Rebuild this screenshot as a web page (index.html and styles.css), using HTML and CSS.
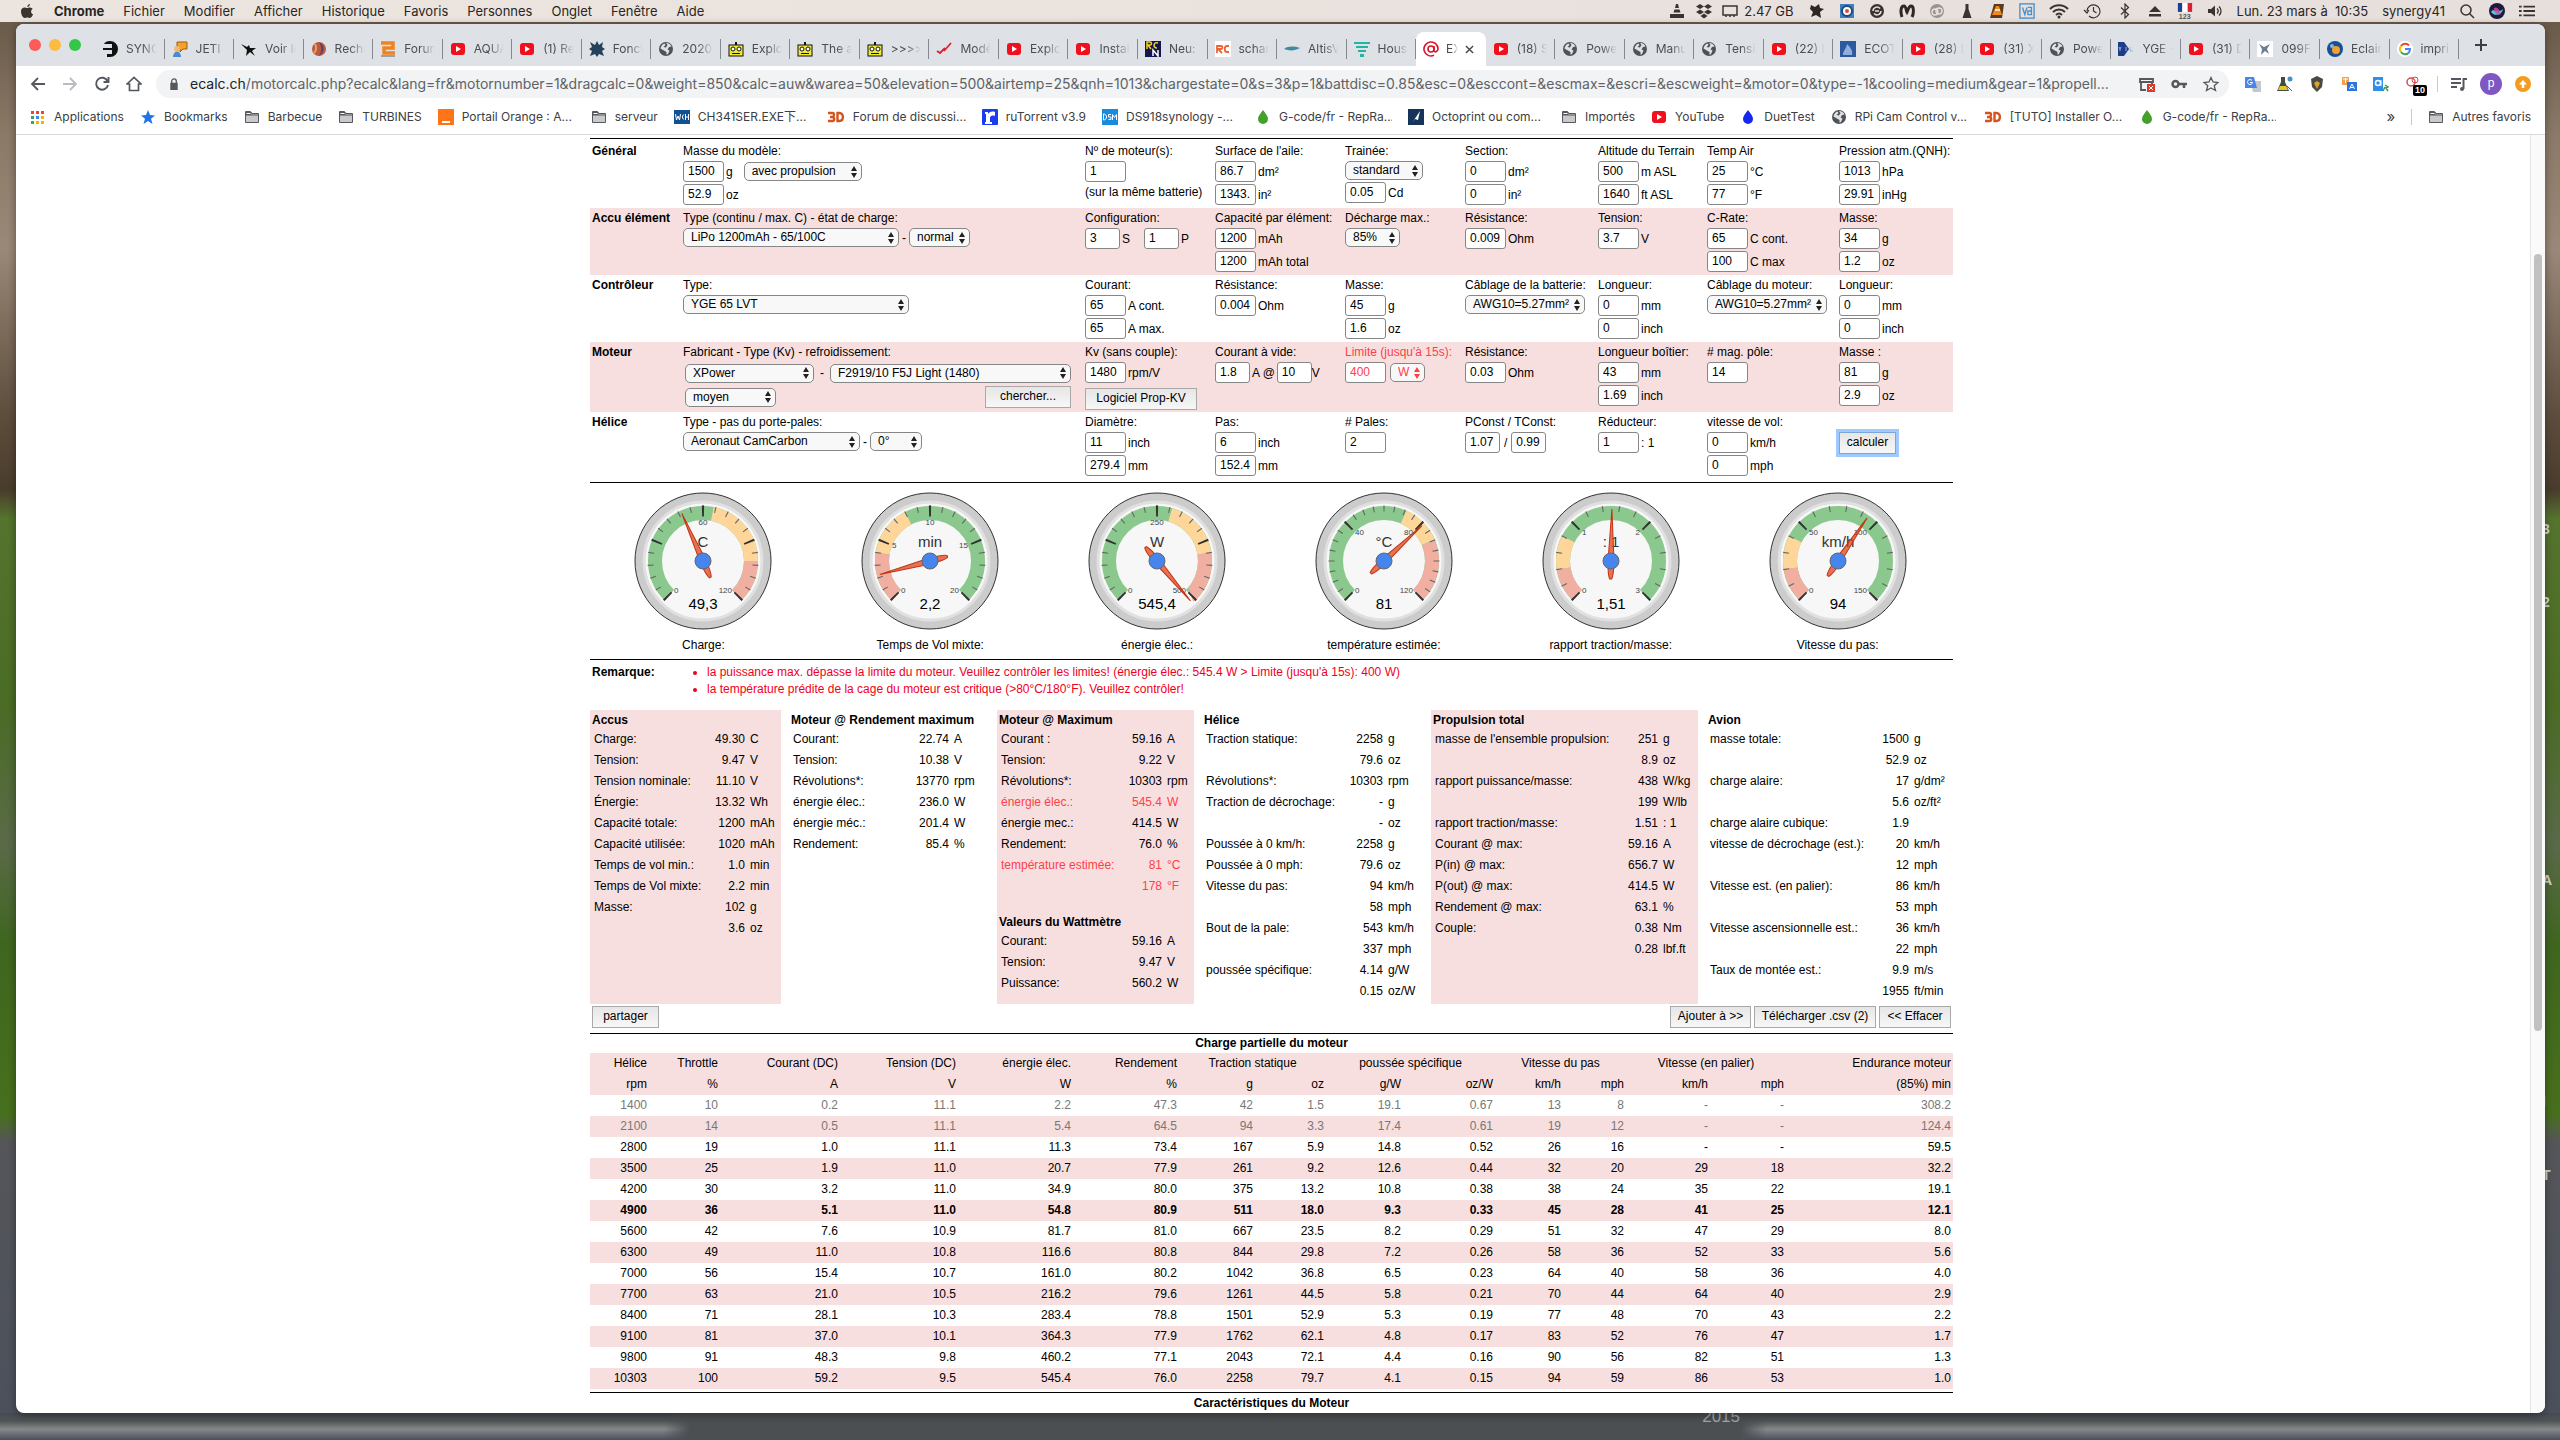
FILE: index.html
```html
<!DOCTYPE html>
<html lang="fr">
<head>
<meta charset="utf-8">
<title>eCalc - propCalc</title>
<link rel="stylesheet" href="styles.css">
</head>
<body>
<svg class="sprite" aria-hidden="true">
  <symbol id="yt" viewBox="0 0 16 16"><rect x="1" y="2" width="14" height="12" rx="3" fill="#f10f1e"/><path d="M6 5l5 3-5 3z" fill="#fff"/></symbol>
  <symbol id="globe" viewBox="0 0 16 16"><circle cx="8" cy="8" r="7" fill="#4f5358"/><path d="M8 2c3 0 4.500 1.500 5.500 3.500L11 6 9.500 8.500l2 1L10 13l-1.500.8V11L5 9 2.500 7.500C3 4.500 5 3 6.500 2.500L7.500 4l-2 2L8 6.500 9.500 4z" fill="#dfe1e5"/></symbol>
  <symbol id="robot" viewBox="0 0 16 16"><path d="M7 1h2v3H7z" fill="#111"/><rect x="1" y="4" width="14" height="11" fill="#ece93a" stroke="#111"/><circle cx="5" cy="8" r="2" fill="#fff" stroke="#111"/><circle cx="11" cy="8" r="2" fill="#fff" stroke="#111"/><path d="M4 12.500h8" stroke="#111"/></symbol>
  <symbol id="folder" viewBox="0 0 16 16"><path d="M1.500 13.500v-11h5l1.500 2h6.500v9z" fill="#c9c9c9" stroke="#55585c"/><path d="M2 3.500h5v2H2zM1.500 6h13" fill="#fff" stroke="#55585c"/></symbol>
  <symbol id="drop" viewBox="0 0 16 16"><path d="M8 1c3 4 5 6 5 9a5 5 0 0 1-10 0c0-3 2-5 5-9z"/></symbol>
  <symbol id="three" viewBox="0 0 18 16"><path d="M1 4h4.500c2 0 2 3.500 0 4H3m2.500 0c2.500.5 2 4 0 4H1M10.500 4v8h2c4.500 0 4.500-8 0-8z" fill="none" stroke="#d4541f" stroke-width="2.400"/></symbol>
  <symbol id="face" viewBox="-70 -70 140 140"><circle r="68" fill="#ccc" stroke="#333"/><circle r="59" fill="#f7f7f7" stroke="#e0e0e0" stroke-width="3"/></symbol>
  <symbol id="needle" viewBox="-70 -70 140 140" overflow="visible"><path d="M0-52L3 0Q3 14 1 18H-1Q-3 14-3 0Z" fill="#dc3912" fill-opacity=".7" stroke="#c63310"/></symbol>
  <path id="minor" d="M52.500 0A52.500 52.500 0 1 1 1.100-52.490" pathLength="271.2" transform="rotate(134.4)" fill="none" stroke="#666" stroke-width="6"/>
  <path id="major" d="M50 0A50 50 0 1 1 2.010-49.960" pathLength="272.3" transform="rotate(133.850)" fill="none" stroke="#333" stroke-width="11"/>
  <circle id="band" r="48" pathLength="360" transform="rotate(135)" fill="none" stroke-width="14"/>
</svg>

<header class="menubar">
  <svg class="ic" viewBox="0 0 16 16"><path d="M11 1c0 1.500-1.200 3-2.700 3C8.200 2.500 9.500 1.200 11 1zM5.500 4.500c1 0 1.700.6 2.500.6s1.800-.7 3-.6c1.200.1 2 .6 2.600 1.400-2.200 1.400-1.900 4.500.5 5.400-.6 1.600-1.900 3.700-3.300 3.700-.9 0-1.300-.5-2.500-.5s-1.600.5-2.500.5C4 15 2 11.500 2 8.500s1.800-4 3.500-4z" fill="#3a3330"/></svg>
  <strong>Chrome</strong><span>Fichier</span><span>Modifier</span><span>Afficher</span><span>Historique</span><span>Favoris</span><span>Personnes</span><span>Onglet</span><span>Fenêtre</span><span>Aide</span>
  <div class="status">
    <svg class="ic" viewBox="0 0 16 16"><path d="M7 1h2l1 4H6zM5.500 6.500h5l1 3h-7zM1 11h14v4H1z" fill="#3a3330"/></svg>
    <svg class="ic dropbox" viewBox="0 0 18 16"><path d="M5 1l4 2.500L5 6 1 3.500zM13 1l4 2.500L13 6 9 3.500zM5 6.500L9 9l-4 2.500L1 9zM13 6.500L17 9l-4 2.500L9 9zM9 10.500l3.500 2.500L9 15.500 5.500 13z" fill="#3a3330"/></svg>
    <svg class="ic mem" viewBox="0 0 16 16"><path d="M1 3h14v9H1zM4 12v2M8 12v2M12 12v2" fill="none" stroke="#3a3330" stroke-width="1.500"/></svg>
    <span class="gb">2.47 GB</span>
    <svg class="ic" viewBox="0 0 16 16"><path d="M2 2l4 2 4-3 1 4 4 1-4 3 1 6-5-3-5 2 2-5-3-3z" fill="#2d2826"/></svg>
    <svg class="ic" viewBox="0 0 16 16"><rect x="1" y="1" width="14" height="14" fill="#3f7fc0"/><circle cx="8" cy="8" r="5" fill="#fff" stroke="#1c4a80" stroke-width="2"/><circle cx="8" cy="8" r="2" fill="#e04a3a"/></svg>
    <svg class="ic" viewBox="0 0 16 16"><circle cx="8" cy="8" r="7" fill="#3a3330"/><path d="M4 8a4 4 0 0 1 7-2.500M12 8a4 4 0 0 1-7 2.500M6 8h4" fill="none" stroke="#e8e2de" stroke-width="1.500"/></svg>
    <svg class="ic" viewBox="0 0 16 16"><path d="M3 14C1 8 2 3 5 3c2 0 2 4 3 6 1-2 2-6 4-6 3 0 3 7 1 11" fill="none" stroke="#2d2826" stroke-width="3"/></svg>
    <svg class="ic" viewBox="0 0 16 16"><circle cx="8" cy="8" r="7" fill="#9a948f"/><circle cx="6" cy="9" r="3" fill="none" stroke="#e8e2de" stroke-width="1.400"/><circle cx="10" cy="8" r="3" fill="none" stroke="#e8e2de" stroke-width="1.400"/></svg>
    <svg class="ic" viewBox="0 0 16 16"><path d="M6.500 1h3v5l3 9h-9l3-9z" fill="#3a3330"/></svg>
    <svg class="ic" viewBox="0 0 16 16"><path d="M5 1h10l-2 14H1z" fill="#5a3a22"/><path d="M7 3h3l3 9H3z" fill="#f08a1c"/><path d="M6 7h5" stroke="#fff" stroke-width="1.500"/></svg>
    <svg class="ic" viewBox="0 0 18 18"><rect x="1" y="1" width="16" height="16" fill="none" stroke="#4b8fc9" stroke-width="1.500"/><path d="M4 5l2.500 8L9 5M10 5h4v4h-4v4h4V9" fill="none" stroke="#4b8fc9" stroke-width="1.500"/></svg>
    <svg class="ic wide" viewBox="0 0 20 16"><path d="M1 6c5-5 13-5 18 0M4 9c3.500-3.500 8.500-3.500 12 0M7 12c2-2 4-2 6 0" fill="none" stroke="#3a3330" stroke-width="2"/><circle cx="10" cy="14" r="1.500" fill="#3a3330"/></svg>
    <svg class="ic wide" viewBox="0 0 20 16"><path d="M4 8a6.500 6.500 0 1 1 2 5M1 7l3 3 2-3M10.500 4v4l3 2" fill="none" stroke="#3a3330" stroke-width="1.200"/></svg>
    <svg class="ic" viewBox="0 0 16 16"><path d="M4 4.500l7.500 7L8 15V1l3.500 3.500-7.500 7" fill="none" stroke="#3a3330" stroke-width="1.200"/></svg>
    <svg class="ic" viewBox="0 0 16 16"><path d="M8 3l6 6H2zM2 11h12v2.500H2z" fill="#3a3330"/></svg>
    <svg class="ic" viewBox="0 0 16 18"><path d="M0 0h5v10H0z" fill="#1c3f94"/><path d="M5 0h6v10H5z" fill="#fff"/><path d="M11 0h5v10h-5z" fill="#d8232e"/><text x="1" y="18" class="t123">123</text></svg>
    <svg class="ic" viewBox="0 0 16 16"><path d="M1 6h3l4-3.500v11L4 10H1z" fill="#3a3330"/><path d="M10 5.500c1.500 1.500 1.500 3.500 0 5M12 3.500c2.700 2.500 2.700 6.500 0 9" fill="none" stroke="#3a3330" stroke-width="1.300"/></svg>
    <span class="date">Lun. 23 mars à&nbsp; 10:35</span>
    <span class="user">synergy41</span>
    <svg class="ic" viewBox="0 0 16 16"><circle cx="7" cy="7" r="5" fill="none" stroke="#3a3330" stroke-width="1.500"/><path d="M10.500 10.500L15 15" stroke="#3a3330" stroke-width="1.500"/></svg>
    <svg class="ic" viewBox="0 0 16 16"><circle cx="8" cy="8" r="8" fill="#1d1a3c"/><path d="M2 9c3-5 5 3 12-3-1 6-8 8-12 3z" fill="#4fd0e0"/><path d="M5 5c3-2 6 2 7 6-4 2-8-2-7-6z" fill="#d94aa0" opacity=".8"/></svg>
    <svg class="ic" viewBox="0 0 18 16"><path d="M5 3h13M5 8h13M5 13h13M0 3h3M0 8h3M0 13h3" stroke="#3a3330" stroke-width="2"/></svg>
  </div>
</header>

<div class="desktop">
<span class="desk d1">3</span><span class="desk d2">2</span><span class="desk d3">A</span><span class="desk d4">I</span><span class="desk d5">T</span><span class="desk year">2015</span>
<div class="window">
  <div class="tabs">
    <i class="light red"></i><i class="light yellow"></i><i class="light green"></i>
    <div class="tablist">
      <div class="tab"><svg class="ic" viewBox="0 0 16 16"><path d="M8 0a8 8 0 0 1 0 16H5v-3h5V9H1V7h9V3H2C3 1 5 0 8 0z" fill="#111"/></svg><span>SYNC</span></div>
      <div class="tab"><svg class="ic" viewBox="0 0 16 16"><path d="M5 1h10v7h-4l-3 3V8H5z" fill="#f5a12a" stroke="#9c5c12"/><circle cx="5" cy="8" r="3" fill="#f0b87a"/><path d="M1 16c0-7 8-7 8 0z" fill="#4a8ad0"/></svg><span>JETI - </span></div>
      <div class="tab"><svg class="ic" viewBox="0 0 16 16"><path d="M0 3l6 3 2-2 1 3 6 0-4 3 3 5-5-4-4 4 1-6z" fill="#111"/></svg><span>Voir le</span></div>
      <div class="tab"><svg class="ic" viewBox="0 0 16 16"><circle cx="8" cy="8" r="7" fill="#b85a3c"/><path d="M8 1c6 3 6 10 0 14 3-5 3-9 0-14z" fill="#5a3c78"/><path d="M4 3c2 3 1 7-1 9" stroke="#e8a06a" fill="none" stroke-width="2"/></svg><span>Reche</span></div>
      <div class="tab"><svg class="ic" viewBox="0 0 16 16"><path d="M1 2h12v5H4v5h11" fill="none" stroke="#ee8420" stroke-width="3.500"/><path d="M1 15h14" stroke="#888" stroke-width="1.500"/></svg><span>Forum</span></div>
      <div class="tab"><svg class="ic"><use href="#yt"/></svg><span>AQUAS</span></div>
      <div class="tab"><svg class="ic"><use href="#yt"/></svg><span>(1) Re</span></div>
      <div class="tab"><svg class="ic" viewBox="0 0 16 16"><path d="M8 0l2 4 4-3-1 5 3 2-3 2 2 5-5-2-2 3-2-3-5 2 2-5-3-2 3-2-2-5 5 3z" fill="#24435a"/></svg><span>Foncti</span></div>
      <div class="tab"><svg class="ic"><use href="#globe"/></svg><span>2020 </span></div>
      <div class="tab"><svg class="ic"><use href="#robot"/></svg><span>Explor</span></div>
      <div class="tab"><svg class="ic"><use href="#robot"/></svg><span>The a</span></div>
      <div class="tab"><svg class="ic"><use href="#robot"/></svg><span>&gt;&gt;&gt;&gt;</span></div>
      <div class="tab"><svg class="ic" viewBox="0 0 16 16"><path d="M1 10l3 2 5-5M8 10l7-8" fill="none" stroke="#e01f2e" stroke-width="1.800"/></svg><span>Modèl</span></div>
      <div class="tab"><svg class="ic"><use href="#yt"/></svg><span>Explo</span></div>
      <div class="tab"><svg class="ic"><use href="#yt"/></svg><span>Instal</span></div>
      <div class="tab"><svg class="ic" viewBox="0 0 16 16"><path d="M0 0h16v16H0z" fill="#15154f"/><path d="M2 8V1h3c2 0 2 3 0 3H3l3 4M13 2c-4-2-6 5-1 5" fill="none" stroke="#f5d21c" stroke-width="1.500"/><path d="M8 15V9l5 6V9" fill="none" stroke="#fff" stroke-width="1.500"/></svg><span>Neu: </span></div>
      <div class="tab"><svg class="ic" viewBox="0 0 16 16"><path d="M0 0h16v16H0z" fill="#fff"/><path d="M2 12V5h4c2 0 2 3 0 3H3l4 4M14 5h-2c-3 0-3 6 0 6h2" fill="none" stroke="#e8663a" stroke-width="1.800"/></svg><span>schar</span></div>
      <div class="tab"><svg class="ic" viewBox="0 0 16 16"><path d="M0 8c4-3 10-3 16-1-5 3-11 3-16 1z" fill="#3a8ca0"/></svg><span>AltisV</span></div>
      <div class="tab"><svg class="ic" viewBox="0 0 16 16"><path d="M0 1h16v2H0zM2 5h12v2H2zM4 9h8v2H4zM6 13h4v3H6z" fill="#22b5a2"/></svg><span>House</span></div>
      <div class="tab active"><svg class="ic" viewBox="0 0 16 16"><circle cx="8" cy="8" r="3" fill="none" stroke="#d9142b" stroke-width="1.600"/><path d="M11 5v5c1 2 4 0 4-2a7 7 0 1 0-4 6.300" fill="none" stroke="#d9142b" stroke-width="1.600"/></svg><span>EX</span><svg class="close" viewBox="0 0 10 10"><path d="M1 1l8 8M9 1L1 9" stroke="#44484d" stroke-width="1.600"/></svg></div>
      <div class="tab"><svg class="ic"><use href="#yt"/></svg><span>(18) S</span></div>
      <div class="tab"><svg class="ic"><use href="#globe"/></svg><span>Power</span></div>
      <div class="tab"><svg class="ic"><use href="#globe"/></svg><span>Manu</span></div>
      <div class="tab"><svg class="ic"><use href="#globe"/></svg><span>Tensi</span></div>
      <div class="tab"><svg class="ic"><use href="#yt"/></svg><span>(22) I</span></div>
      <div class="tab"><svg class="ic" viewBox="0 0 16 16"><path d="M0 0h16v16H0z" fill="#2d5a9e"/><path d="M3 14c0-5 3-5 4-11 4 4 6 7 5 11z" fill="#8fb0dc"/></svg><span>ECOT</span></div>
      <div class="tab"><svg class="ic"><use href="#yt"/></svg><span>(28) I</span></div>
      <div class="tab"><svg class="ic"><use href="#yt"/></svg><span>(31) X</span></div>
      <div class="tab"><svg class="ic"><use href="#globe"/></svg><span>Power</span></div>
      <div class="tab"><svg class="ic" viewBox="0 0 16 16"><path d="M0 1h6l5 7-5 7H0z" fill="#1d3c8c"/><path d="M1 6l1 2 1-2M2 8v2M8 6v4M12 6v4h3" stroke="#9fb4e0" fill="none"/></svg><span>YGE - </span></div>
      <div class="tab"><svg class="ic"><use href="#yt"/></svg><span>(31) D</span></div>
      <div class="tab"><svg class="ic" viewBox="0 0 16 16"><path d="M0 0h16v16H0z" fill="#fff"/><path d="M2 3l5 3 6-3-3 5 2 5-4-3-4 4 1-6z" fill="#6a7f90"/></svg><span>099F</span></div>
      <div class="tab"><svg class="ic" viewBox="0 0 16 16"><circle cx="8" cy="8" r="8" fill="#1a4f94"/><circle cx="9" cy="9" r="4" fill="#f0a030"/><circle cx="5" cy="5" r="2" fill="#7ab8e8"/></svg><span>Eclair</span></div>
      <div class="tab"><svg class="ic" viewBox="0 0 16 16"><circle cx="8" cy="8" r="8" fill="#fff"/><path d="M12 4.500A5 5 0 0 0 4 5" stroke="#ea4335" stroke-width="2" fill="none"/><path d="M4 5a5 5 0 0 0 0 6" stroke="#fbbc05" stroke-width="2" fill="none"/><path d="M4 11a5 5 0 0 0 7.500 1" stroke="#34a853" stroke-width="2" fill="none"/><path d="M8 8h5c0 2-.5 3-1.500 4" stroke="#4285f4" stroke-width="2" fill="none"/></svg><span>impri</span></div>
    </div>
    <svg class="plus" viewBox="0 0 14 14"><path d="M7 1v12M1 7h12" stroke="#3c4043" stroke-width="2"/></svg>
  </div>

  <div class="toolbar">
    <svg class="ic" viewBox="0 0 16 16"><path d="M15 8H2M8 2L2 8l6 6" fill="none" stroke="#55595e" stroke-width="1.800"/></svg>
    <svg class="ic" viewBox="0 0 16 16"><path d="M1 8h13M8 2l6 6-6 6" fill="none" stroke="#b9bcc0" stroke-width="1.800"/></svg>
    <svg class="ic" viewBox="0 0 16 16"><path d="M13.500 5A6 6 0 1 0 14 9M14.500 1v5h-5" fill="none" stroke="#55595e" stroke-width="1.900"/></svg>
    <svg class="ic" viewBox="0 0 16 16"><path d="M1 8l7-6.500L15 8h-2.500v6.500h-9V8z" fill="none" stroke="#55595e" stroke-width="1.700"/></svg>
    <div class="omnibox">
      <svg class="lock" viewBox="0 0 10 14"><path d="M1 5h8v8H1z" fill="#55595e"/><path d="M2.500 6V3.500a2.500 2.500 0 0 1 5 0V6" fill="none" stroke="#55595e" stroke-width="1.400"/></svg>
      <div class="url"><b>ecalc.ch</b>/motorcalc.php?ecalc&amp;lang=fr&amp;motornumber=1&amp;dragcalc=0&amp;weight=850&amp;calc=auw&amp;warea=50&amp;elevation=500&amp;airtemp=25&amp;qnh=1013&amp;chargestate=0&amp;s=3&amp;p=1&amp;battdisc=0.85&amp;esc=0&amp;esccont=&amp;escmax=&amp;escri=&amp;escweight=&amp;motor=0&amp;type=-1&amp;cooling=medium&amp;gear=1&amp;propell...</div>
      <svg class="ic" viewBox="0 0 16 16"><path d="M1 3h13v3H1zM2 6v8h5M13 6v2" fill="none" stroke="#55595e" stroke-width="1.800"/><path d="M8 8h8v8H8z" fill="#d93a2f"/><path d="M10 10l4 4M14 10l-4 4" stroke="#fff"/></svg>
      <svg class="ic" viewBox="0 0 16 16"><circle cx="4.500" cy="8" r="3" fill="none" stroke="#55595e" stroke-width="2.500"/><path d="M8 8h8M13 8v4" stroke="#55595e" stroke-width="2.500"/></svg>
      <svg class="ic" viewBox="0 0 16 16"><path d="M8 1.500l2 4.500 5 .5-3.800 3.200L12.500 14.500 8 12l-4.500 2.500 1.300-4.800L1 6.500 6 6z" fill="none" stroke="#55595e" stroke-width="1.300"/></svg>
    </div>
    <svg class="ic" viewBox="0 0 16 16"><path d="M5 5h11v11H8z" fill="#c4c7cc"/><path d="M0 1h9l3 11H0z" fill="#4a86e8"/><path d="M7 4.500a2.500 2.500 0 1 0 .5 2H5" stroke="#fff" fill="none"/></svg>
    <svg class="ic" viewBox="0 0 16 16"><path d="M4 1h4v5l4 9H0l4-9z" fill="#3f4f3c"/><path d="M3 10h6l2 4H1z" fill="#e3c62c"/><circle cx="13" cy="3" r="2.500" fill="#4a90c8"/><path d="M10 10l5 5" stroke="#555"/></svg>
    <svg class="ic" viewBox="0 0 16 16"><path d="M8 0l6 3-1 8-5 5-5-5-1-8z" fill="#4b4a42"/><path d="M8 5l3 2-3 6-3-6z" fill="#d8a52c"/></svg>
    <svg class="ic" viewBox="0 0 16 16"><path d="M1 1h7v8H1z" fill="#f0a050"/><path d="M2 3h5M4.500 2v5" stroke="#fff"/><path d="M6 6h10v9H6z" fill="#2f74dc"/><path d="M8.500 13l2.500-5 2.500 5M9.500 11.500h3" stroke="#fff" fill="none"/></svg>
    <svg class="ic" viewBox="0 0 16 16"><rect width="10" height="14" y="1" fill="#2f8fe8"/><circle cx="5" cy="7" r="2.500" fill="none" stroke="#fff" stroke-width="1.500"/><path d="M8 4v6" stroke="#fff"/><path d="M12 9l3 2-2 1 2 3M12 11l-2 4" stroke="#3c9e48" stroke-width="1.500" fill="none"/></svg>
    <span class="ext"><svg class="ic" viewBox="0 0 16 16"><circle cx="6" cy="6" r="4" fill="none" stroke="#d94a50" stroke-width="1.500"/><circle cx="10" cy="4" r="3" fill="none" stroke="#d94a50"/><path d="M8 9l4 4" stroke="#d94a50" stroke-width="1.500"/></svg><em>10</em></span>
    <i class="vsep"></i>
    <svg class="ic" viewBox="0 0 16 16"><path d="M0 3h10M0 7h10M0 11h6M12.500 13V3H16" fill="none" stroke="#55595e" stroke-width="2"/><circle cx="11" cy="13" r="2" fill="#55595e"/></svg>
    <span class="avatar">p</span>
    <svg class="ic" viewBox="0 0 16 16"><circle cx="8" cy="8" r="8" fill="#f39c1f"/><path d="M8 4l4 4.500H9.300V12H6.700V8.500H4z" fill="#fff"/></svg>
  </div>

  <nav class="bookmarks">
    <a href="#"><svg class="ic" viewBox="0 0 16 16"><path d="M1 2h3v3H1z M6 2h3v3H6z M11 2h3v3h-3z" fill="#e8453c"/><path d="M1 7h3v3H1z" fill="#34a853"/><path d="M6 7h3v3H6z" fill="#4285f4"/><path d="M11 7h3v3h-3z" fill="#f5b400"/><path d="M1 12h3v3H1z" fill="#34a853"/><path d="M6 12h3v3H6zM11 12h3v3h-3z" fill="#f5b400"/></svg><span>Applications</span></a>
    <a href="#"><svg class="ic" viewBox="0 0 16 16"><path d="M8 1l2 5 5 .5-4 3.300L12.500 15 8 12l-4.500 3L5 9.800 1 6.500 6 6z" fill="#1f74e8"/></svg><span>Bookmarks</span></a>
    <a href="#"><svg class="ic"><use href="#folder"/></svg><span>Barbecue</span></a>
    <a href="#"><svg class="ic"><use href="#folder"/></svg><span>TURBINES</span></a>
    <a href="#"><svg class="ic" viewBox="0 0 16 16"><path d="M0 0h16v16H0z" fill="#ff7416"/><path d="M4 12h8v2H4z" fill="#fff"/></svg><span class="clip">Portail Orange : A...</span></a>
    <a href="#"><svg class="ic"><use href="#folder"/></svg><span>serveur</span></a>
    <a href="#"><svg class="ic" viewBox="0 0 16 16"><path d="M0 1h16v14H0z" fill="#134f93"/><path d="M1.500 5l1 6 1.500-4 1.500 4 1-6M10 6c-2-1-2 5 0 4M11.500 5v6M11.500 8h3M14.500 5v6" fill="none" stroke="#fff"/></svg><span class="clip">CH341SER.EXE下...</span></a>
    <a href="#"><svg class="ic w3d"><use href="#three"/></svg><span class="clip">Forum de discussi...</span></a>
    <a href="#"><svg class="ic" viewBox="0 0 16 16"><rect width="16" height="16" rx="1" fill="#1b3cf0"/><path d="M3 3h3v2c1-2 4-3 7-2v4c-3-1-5 0-5 2v4h2v2H3v-2h1V5H3z" fill="#fff"/></svg><span>ruTorrent v3.9</span></a>
    <a href="#"><svg class="ic" viewBox="0 0 16 16"><path d="M0 0h16v16H0z" fill="#168be0"/><path d="M1.500 5v6c4 0 4-6 0-6zM9 5.500H6.500v2.500H9v2.500H6.500M10.500 11V5.500l2 3 2-3V11" fill="none" stroke="#fff"/></svg><span class="clip">DS918synology -...</span></a>
    <a href="#"><svg class="ic leaf"><use href="#drop"/></svg><span class="clip">G-code/fr - RepRa...</span></a>
    <a href="#"><svg class="ic" viewBox="0 0 16 16"><path d="M0 0h16v16H0z" fill="#14345c"/><path d="M4 14L12 2l-2 9-3-1z" fill="#fff"/></svg><span class="clip">Octoprint ou com...</span></a>
    <a href="#"><svg class="ic"><use href="#folder"/></svg><span>Importés</span></a>
    <a href="#"><svg class="ic"><use href="#yt"/></svg><span>YouTube</span></a>
    <a href="#"><svg class="ic duet"><use href="#drop"/></svg><span>DuetTest</span></a>
    <a href="#"><svg class="ic"><use href="#globe"/></svg><span class="clip">RPi Cam Control v...</span></a>
    <a href="#"><svg class="ic w3d"><use href="#three"/></svg><span class="clip">[TUTO] Installer O...</span></a>
    <a href="#"><svg class="ic leaf"><use href="#drop"/></svg><span class="clip">G-code/fr - RepRa...</span></a>
    <span class="more">»</span><i class="vsep"></i>
    <a href="#"><svg class="ic"><use href="#folder"/></svg><span>Autres favoris</span></a>
  </nav>

  <div class="viewport">
  <main class="page">
  <div class="sheet">
    <form class="inputs">
      <section class="row first">
        <h2>Général</h2>
        <div class="cell"><span class="cap">Masse du modèle:</span>
          <div class="line"><label><input value="1500"> g</label><select class="w118 lead" aria-label="Masse"><option>avec propulsion</option></select></div>
          <div class="line"><label><input value="52.9"> oz</label></div></div>
        <div class="cell"><span class="cap">Nº de moteur(s):</span>
          <div class="line"><input value="1" aria-label="Nombre de moteurs"></div><span class="note">(sur la même batterie)</span></div>
        <div class="cell"><span class="cap">Surface de l'aile:</span>
          <div class="line"><label><input value="86.7"> dm²</label></div><div class="line"><label><input value="1343."> in²</label></div></div>
        <div class="cell"><span class="cap">Trainée:</span>
          <div class="line"><select class="w78" aria-label="Trainée"><option>standard</option></select></div><div class="line"><label><input value="0.05"> Cd</label></div></div>
        <div class="cell"><span class="cap">Section:</span>
          <div class="line"><label><input value="0"> dm²</label></div><div class="line"><label><input value="0"> in²</label></div></div>
        <div class="cell"><span class="cap">Altitude du Terrain</span>
          <div class="line"><label><input value="500"> m ASL</label></div><div class="line"><label><input value="1640"> ft ASL</label></div></div>
        <div class="cell"><span class="cap">Temp Air</span>
          <div class="line"><label><input value="25"> °C</label></div><div class="line"><label><input value="77"> °F</label></div></div>
        <div class="cell"><span class="cap">Pression atm.(QNH):</span>
          <div class="line"><label><input value="1013"> hPa</label></div><div class="line"><label><input value="29.91"> inHg</label></div></div>
      </section>
      <section class="row pink">
        <h2>Accu élément</h2>
        <div class="cell"><span class="cap">Type (continu / max. C) - état de charge:</span>
          <div class="line dash"><select class="w216" aria-label="Type d'accu"><option>LiPo 1200mAh - 65/100C</option></select>-<select class="w61" aria-label="État de charge"><option>normal</option></select></div></div>
        <div class="cell"><span class="cap">Configuration:</span>
          <div class="line"><label><input class="short" value="3"> S</label><label class="lead2"><input class="short" value="1"> P</label></div></div>
        <div class="cell"><span class="cap">Capacité par élément:</span>
          <div class="line"><label><input value="1200"> mAh</label></div><div class="line"><label><input value="1200"> mAh total</label></div></div>
        <div class="cell"><span class="cap">Décharge max.:</span>
          <div class="line"><select class="w55" aria-label="Décharge max."><option>85%</option></select></div></div>
        <div class="cell"><span class="cap">Résistance:</span>
          <div class="line"><label><input value="0.009"> Ohm</label></div></div>
        <div class="cell"><span class="cap">Tension:</span>
          <div class="line"><label><input value="3.7"> V</label></div></div>
        <div class="cell"><span class="cap">C-Rate:</span>
          <div class="line"><label><input value="65"> C cont.</label></div><div class="line"><label><input value="100"> C max</label></div></div>
        <div class="cell"><span class="cap">Masse:</span>
          <div class="line"><label><input value="34"> g</label></div><div class="line"><label><input value="1.2"> oz</label></div></div>
      </section>
      <section class="row">
        <h2>Contrôleur</h2>
        <div class="cell"><span class="cap">Type:</span>
          <div class="line"><select class="w226" aria-label="Type de contrôleur"><option>YGE 65 LVT</option></select></div></div>
        <div class="cell"><span class="cap">Courant:</span>
          <div class="line"><label><input value="65"> A cont.</label></div><div class="line"><label><input value="65"> A max.</label></div></div>
        <div class="cell"><span class="cap">Résistance:</span>
          <div class="line"><label><input value="0.004"> Ohm</label></div></div>
        <div class="cell"><span class="cap">Masse:</span>
          <div class="line"><label><input value="45"> g</label></div><div class="line"><label><input value="1.6"> oz</label></div></div>
        <div class="cell"><span class="cap">Câblage de la batterie:</span>
          <div class="line"><select class="w120" aria-label="Câblage de la batterie"><option>AWG10=5.27mm²</option></select></div></div>
        <div class="cell"><span class="cap">Longueur:</span>
          <div class="line"><label><input value="0"> mm</label></div><div class="line"><label><input value="0"> inch</label></div></div>
        <div class="cell"><span class="cap">Câblage du moteur:</span>
          <div class="line"><select class="w120" aria-label="Câblage du moteur"><option>AWG10=5.27mm²</option></select></div></div>
        <div class="cell"><span class="cap">Longueur:</span>
          <div class="line"><label><input value="0"> mm</label></div><div class="line"><label><input value="0"> inch</label></div></div>
      </section>
      <section class="row pink tall">
        <h2>Moteur</h2>
        <div class="cell motor"><span class="cap">Fabricant - Type (Kv) - refroidissement:</span>
          <div class="line"><select class="w129" aria-label="Fabricant"><option>XPower</option></select>-<select class="w241" aria-label="Type de moteur"><option>F2919/10 F5J Light (1480)</option></select></div>
          <div class="line"><select class="w91" aria-label="Refroidissement"><option>moyen</option></select><button type="button" class="w86">chercher...</button></div></div>
        <div class="cell"><span class="cap">Kv (sans couple):</span>
          <div class="line"><label><input value="1480"> rpm/V</label></div><div class="line below"><button type="button" class="w112">Logiciel Prop-KV</button></div></div>
        <div class="cell"><span class="cap">Courant à vide:</span>
          <div class="line"><label><input class="short" value="1.8"> A @</label><label class="lead1"><input class="short" value="10">V</label></div></div>
        <div class="cell warn"><span class="cap">Limite (jusqu'à 15s):</span>
          <div class="line"><input value="400" aria-label="Limite"><select class="w35" aria-label="Unité de la limite"><option>W</option></select></div></div>
        <div class="cell"><span class="cap">Résistance:</span>
          <div class="line"><label><input value="0.03"> Ohm</label></div></div>
        <div class="cell"><span class="cap">Longueur boîtier:</span>
          <div class="line"><label><input value="43"> mm</label></div><div class="line"><label><input value="1.69"> inch</label></div></div>
        <div class="cell"><span class="cap"># mag. pôle:</span>
          <div class="line"><input value="14" aria-label="Nombre de pôles"></div></div>
        <div class="cell"><span class="cap">Masse :</span>
          <div class="line"><label><input value="81"> g</label></div><div class="line"><label><input value="2.9"> oz</label></div></div>
      </section>
      <section class="row tall">
        <h2>Hélice</h2>
        <div class="cell"><span class="cap">Type - pas du porte-pales:</span>
          <div class="line dash"><select class="w177" aria-label="Type d'hélice"><option>Aeronaut CamCarbon</option></select>-<select class="w52" aria-label="Pas du porte-pales"><option>0°</option></select></div></div>
        <div class="cell"><span class="cap">Diamètre:</span>
          <div class="line"><label><input value="11"> inch</label></div><div class="line"><label><input value="279.4"> mm</label></div></div>
        <div class="cell"><span class="cap">Pas:</span>
          <div class="line"><label><input value="6"> inch</label></div><div class="line"><label><input value="152.4"> mm</label></div></div>
        <div class="cell"><span class="cap"># Pales:</span>
          <div class="line"><input value="2" aria-label="Nombre de pales"></div></div>
        <div class="cell"><span class="cap">PConst / TConst:</span>
          <div class="line"><input class="short" value="1.07" aria-label="PConst">/<input class="short" value="0.99" aria-label="TConst"></div></div>
        <div class="cell"><span class="cap">Réducteur:</span>
          <div class="line"><label><input value="1"> : 1</label></div></div>
        <div class="cell"><span class="cap">vitesse de vol:</span>
          <div class="line"><label><input value="0"> km/h</label></div><div class="line"><label><input value="0"> mph</label></div></div>
        <div class="cell"><span class="cap"></span>
          <div class="line"><button type="button" class="w57 focus">calculer</button></div></div>
      </section>
    </form>

    <section class="gauges">
      <figure><svg viewBox="-70 -70 140 140"><use href="#face" x="-70" y="-70" width="140" height="140"/><use href="#band" class="ok" stroke-dasharray="270 360"/><use href="#band" class="mid" stroke-dasharray="78.750 360" stroke-dashoffset="-146.250"/><use href="#band" class="bad" stroke-dasharray="45 360" stroke-dashoffset="-225"/><use href="#minor" stroke-dasharray="1.200 12.300"/><use href="#major" stroke-dasharray="2.300 65.200"/><text class="tick" x="-29" y="32">0</text><text class="tick mid-a" y="-36">60</text><text class="tick end" x="29" y="32">120</text><text class="unit" y="-14">C</text><text class="val" y="48">49,3</text><use href="#needle" x="-70" y="-70" width="140" height="140" transform="rotate(-24)"/><circle class="hub" r="8"/></svg><figcaption>Charge:</figcaption></figure>
      <figure><svg viewBox="-70 -70 140 140"><use href="#face" x="-70" y="-70" width="140" height="140"/><use href="#band" class="ok" stroke-dasharray="270 360"/><use href="#band" class="mid" stroke-dasharray="54 360" stroke-dashoffset="-54"/><use href="#band" class="bad" stroke-dasharray="54 360"/><use href="#minor" stroke-dasharray="1.200 12.300"/><use href="#major" stroke-dasharray="2.300 65.200"/><text class="tick" x="-29" y="32">0</text><text class="tick" x="-38" y="-13">5</text><text class="tick mid-a" y="-36">10</text><text class="tick end" x="38" y="-13">15</text><text class="tick end" x="29" y="32">20</text><text class="unit" y="-14">min</text><text class="val" y="48">2,2</text><use href="#needle" x="-70" y="-70" width="140" height="140" transform="rotate(-105)"/><circle class="hub" r="8"/></svg><figcaption>Temps de Vol mixte:</figcaption></figure>
      <figure><svg viewBox="-70 -70 140 140"><use href="#face" x="-70" y="-70" width="140" height="140"/><use href="#band" class="ok" stroke-dasharray="270 360"/><use href="#band" class="mid" stroke-dasharray="65 360" stroke-dashoffset="-151"/><use href="#band" class="bad" stroke-dasharray="54 360" stroke-dashoffset="-216"/><use href="#minor" stroke-dasharray="1.200 12.300"/><use href="#major" stroke-dasharray="2.300 65.200"/><text class="tick" x="-29" y="32">0</text><text class="tick mid-a" y="-36">250</text><text class="tick end" x="29" y="32">500</text><text class="unit" y="-14">W</text><text class="val" y="48">545,4</text><use href="#needle" x="-70" y="-70" width="140" height="140" transform="rotate(140)"/><circle class="hub" r="8"/></svg><figcaption>énergie élec.:</figcaption></figure>
      <figure><svg viewBox="-70 -70 140 140"><use href="#face" x="-70" y="-70" width="140" height="140"/><use href="#band" class="ok" stroke-dasharray="270 360"/><use href="#band" class="mid" stroke-dasharray="43 360" stroke-dashoffset="-159"/><use href="#band" class="bad" stroke-dasharray="67.500 360" stroke-dashoffset="-202.500"/><use href="#minor" stroke-dasharray="1.200 10.050"/><use href="#major" stroke-dasharray="2.300 87.700"/><text class="tick" x="-29" y="32">0</text><text class="tick" x="-29" y="-26">40</text><text class="tick end" x="29" y="-26">80</text><text class="tick end" x="29" y="32">120</text><text class="unit" y="-14">°C</text><text class="val" y="48">81</text><use href="#needle" x="-70" y="-70" width="140" height="140" transform="rotate(47)"/><circle class="hub" r="8"/></svg><figcaption>température estimée:</figcaption></figure>
      <figure><svg viewBox="-70 -70 140 140"><use href="#face" x="-70" y="-70" width="140" height="140"/><use href="#band" class="ok" stroke-dasharray="270 360"/><use href="#band" class="mid" stroke-dasharray="36 360" stroke-dashoffset="-36"/><use href="#band" class="bad" stroke-dasharray="36 360"/><use href="#minor" stroke-dasharray="1.200 16.800"/><use href="#major" stroke-dasharray="2.300 87.700"/><text class="tick" x="-29" y="32">0</text><text class="tick" x="-29" y="-26">1</text><text class="tick end" x="29" y="-26">2</text><text class="tick end" x="29" y="32">3</text><text class="unit" y="-14">: 1</text><text class="val" y="48">1,51</text><use href="#needle" x="-70" y="-70" width="140" height="140" transform="rotate(1)"/><circle class="hub" r="8"/></svg><figcaption>rapport traction/masse:</figcaption></figure>
      <figure><svg viewBox="-70 -70 140 140"><use href="#face" x="-70" y="-70" width="140" height="140"/><use href="#band" class="ok" stroke-dasharray="270 360"/><use href="#band" class="mid" stroke-dasharray="36 360" stroke-dashoffset="-36"/><use href="#band" class="bad" stroke-dasharray="36 360"/><use href="#minor" stroke-dasharray="1.200 16.800"/><use href="#major" stroke-dasharray="2.300 87.700"/><text class="tick" x="-29" y="32">0</text><text class="tick" x="-29" y="-26">50</text><text class="tick end" x="29" y="-26">100</text><text class="tick end" x="29" y="32">150</text><text class="unit" y="-14">km/h</text><text class="val" y="48">94</text><use href="#needle" x="-70" y="-70" width="140" height="140" transform="rotate(34)"/><circle class="hub" r="8"/></svg><figcaption>Vitesse du pas:</figcaption></figure>
    </section>

    <section class="remark">
      <h2>Remarque:</h2>
      <ul><li>la puissance max. dépasse la limite du moteur. Veuillez contrôler les limites! (énergie élec.: 545.4 W &gt; Limite (jusqu'à 15s): 400 W)</li><li>la température prédite de la cage du moteur est critique (&gt;80°C/180°F). Veuillez contrôler!</li></ul>
    </section>

    <section class="results">
      <div class="block pink"><h2>Accus</h2><table class="kv u36">
        <tr><th>Charge:</th><td>49.30</td><td>C</td></tr><tr><th>Tension:</th><td>9.47</td><td>V</td></tr><tr><th>Tension nominale:</th><td>11.10</td><td>V</td></tr><tr><th>Énergie:</th><td>13.32</td><td>Wh</td></tr><tr><th>Capacité totale:</th><td>1200</td><td>mAh</td></tr><tr><th>Capacité utilisée:</th><td>1020</td><td>mAh</td></tr><tr><th>Temps de vol min.:</th><td>1.0</td><td>min</td></tr><tr><th>Temps de Vol mixte:</th><td>2.2</td><td>min</td></tr><tr><th>Masse:</th><td>102</td><td>g</td></tr><tr><th></th><td>3.6</td><td>oz</td></tr></table></div>
      <div class="block"><h2>Moteur @ Rendement maximum</h2><table class="kv u48">
        <tr><th>Courant:</th><td>22.74</td><td>A</td></tr><tr><th>Tension:</th><td>10.38</td><td>V</td></tr><tr><th>Révolutions*:</th><td>13770</td><td>rpm</td></tr><tr><th>énergie élec.:</th><td>236.0</td><td>W</td></tr><tr><th>énergie méc.:</th><td>201.4</td><td>W</td></tr><tr><th>Rendement:</th><td>85.4</td><td>%</td></tr></table></div>
      <div class="block pink"><h2>Moteur @ Maximum</h2><table class="kv u32">
        <tr><th>Courant :</th><td>59.16</td><td>A</td></tr><tr><th>Tension:</th><td>9.22</td><td>V</td></tr><tr><th>Révolutions*:</th><td>10303</td><td>rpm</td></tr><tr class="warn"><th>énergie élec.:</th><td>545.4</td><td>W</td></tr><tr><th>énergie mec.:</th><td>414.5</td><td>W</td></tr><tr><th>Rendement:</th><td>76.0</td><td>%</td></tr><tr class="warn"><th>température estimée:</th><td>81</td><td>°C</td></tr><tr class="warn"><th></th><td>178</td><td>°F</td></tr></table>
        <h2 class="sub">Valeurs du Wattmètre</h2><table class="kv u32"><tr><th>Courant:</th><td>59.16</td><td>A</td></tr><tr><th>Tension:</th><td>9.47</td><td>V</td></tr><tr><th>Puissance:</th><td>560.2</td><td>W</td></tr></table></div>
      <div class="block"><h2>Hélice</h2><table class="kv u48">
        <tr><th>Traction statique:</th><td>2258</td><td>g</td></tr><tr><th></th><td>79.6</td><td>oz</td></tr><tr><th>Révolutions*:</th><td>10303</td><td>rpm</td></tr><tr><th>Traction de décrochage:</th><td>-</td><td>g</td></tr><tr><th></th><td>-</td><td>oz</td></tr><tr><th>Poussée à 0 km/h:</th><td>2258</td><td>g</td></tr><tr><th>Poussée à 0 mph:</th><td>79.6</td><td>oz</td></tr><tr><th>Vitesse du pas:</th><td>94</td><td>km/h</td></tr><tr><th></th><td>58</td><td>mph</td></tr><tr><th>Bout de la pale:</th><td>543</td><td>km/h</td></tr><tr><th></th><td>337</td><td>mph</td></tr><tr><th>poussée spécifique:</th><td>4.14</td><td>g/W</td></tr><tr><th></th><td>0.15</td><td>oz/W</td></tr></table></div>
      <div class="block pink"><h2>Propulsion total</h2><table class="kv u40">
        <tr><th>masse de l'ensemble propulsion:</th><td>251</td><td>g</td></tr><tr><th></th><td>8.9</td><td>oz</td></tr><tr><th>rapport puissance/masse:</th><td>438</td><td>W/kg</td></tr><tr><th></th><td>199</td><td>W/lb</td></tr><tr><th>rapport traction/masse:</th><td>1.51</td><td>: 1</td></tr><tr><th>Courant @ max:</th><td>59.16</td><td>A</td></tr><tr><th>P(in) @ max:</th><td>656.7</td><td>W</td></tr><tr><th>P(out) @ max:</th><td>414.5</td><td>W</td></tr><tr><th>Rendement @ max:</th><td>63.1</td><td>%</td></tr><tr><th>Couple:</th><td>0.38</td><td>Nm</td></tr><tr><th></th><td>0.28</td><td>lbf.ft</td></tr></table></div>
      <div class="block"><h2>Avion</h2><table class="kv u44">
        <tr><th>masse totale:</th><td>1500</td><td>g</td></tr><tr><th></th><td>52.9</td><td>oz</td></tr><tr><th>charge alaire:</th><td>17</td><td>g/dm²</td></tr><tr><th></th><td>5.6</td><td>oz/ft²</td></tr><tr><th>charge alaire cubique:</th><td>1.9</td><td></td></tr><tr><th>vitesse de décrochage (est.):</th><td>20</td><td>km/h</td></tr><tr><th></th><td>12</td><td>mph</td></tr><tr><th>Vitesse est. (en palier):</th><td>86</td><td>km/h</td></tr><tr><th></th><td>53</td><td>mph</td></tr><tr><th>Vitesse ascensionnelle est.:</th><td>36</td><td>km/h</td></tr><tr><th></th><td>22</td><td>mph</td></tr><tr><th>Taux de montée est.:</th><td>9.9</td><td>m/s</td></tr><tr><th></th><td>1955</td><td>ft/min</td></tr></table></div>
    </section>

    <div class="actions">
      <button type="button" class="w67 push">partager</button><button type="button" class="w81">Ajouter à &gt;&gt;</button><button type="button" class="w122">Télécharger .csv (2)</button><button type="button" class="w72">&lt;&lt; Effacer</button>
    </div>

    <table class="partial">
      <caption>Charge partielle du moteur</caption>
      <colgroup><col><col><col><col><col><col><col><col><col><col><col><col><col><col><col></colgroup>
      <thead>
        <tr><th>Hélice</th><th>Throttle</th><th>Courant (DC)</th><th>Tension (DC)</th><th>énergie élec.</th><th>Rendement</th><th colspan="2">Traction statique</th><th colspan="2">poussée spécifique</th><th colspan="2">Vitesse du pas</th><th colspan="2">Vitesse (en palier)</th><th>Endurance moteur</th></tr>
        <tr><th>rpm</th><th>%</th><th>A</th><th>V</th><th>W</th><th>%</th><th>g</th><th>oz</th><th>g/W</th><th>oz/W</th><th>km/h</th><th>mph</th><th>km/h</th><th>mph</th><th>(85%) min</th></tr>
      </thead>
      <tbody>
        <tr class="dim"><td>1400</td><td>10</td><td>0.2</td><td>11.1</td><td>2.2</td><td>47.3</td><td>42</td><td>1.5</td><td>19.1</td><td>0.67</td><td>13</td><td>8</td><td>-</td><td>-</td><td>308.2</td></tr>
        <tr class="dim"><td>2100</td><td>14</td><td>0.5</td><td>11.1</td><td>5.4</td><td>64.5</td><td>94</td><td>3.3</td><td>17.4</td><td>0.61</td><td>19</td><td>12</td><td>-</td><td>-</td><td>124.4</td></tr>
        <tr><td>2800</td><td>19</td><td>1.0</td><td>11.1</td><td>11.3</td><td>73.4</td><td>167</td><td>5.9</td><td>14.8</td><td>0.52</td><td>26</td><td>16</td><td>-</td><td>-</td><td>59.5</td></tr>
        <tr><td>3500</td><td>25</td><td>1.9</td><td>11.0</td><td>20.7</td><td>77.9</td><td>261</td><td>9.2</td><td>12.6</td><td>0.44</td><td>32</td><td>20</td><td>29</td><td>18</td><td>32.2</td></tr>
        <tr><td>4200</td><td>30</td><td>3.2</td><td>11.0</td><td>34.9</td><td>80.0</td><td>375</td><td>13.2</td><td>10.8</td><td>0.38</td><td>38</td><td>24</td><td>35</td><td>22</td><td>19.1</td></tr>
        <tr class="best"><td>4900</td><td>36</td><td>5.1</td><td>11.0</td><td>54.8</td><td>80.9</td><td>511</td><td>18.0</td><td>9.3</td><td>0.33</td><td>45</td><td>28</td><td>41</td><td>25</td><td>12.1</td></tr>
        <tr><td>5600</td><td>42</td><td>7.6</td><td>10.9</td><td>81.7</td><td>81.0</td><td>667</td><td>23.5</td><td>8.2</td><td>0.29</td><td>51</td><td>32</td><td>47</td><td>29</td><td>8.0</td></tr>
        <tr><td>6300</td><td>49</td><td>11.0</td><td>10.8</td><td>116.6</td><td>80.8</td><td>844</td><td>29.8</td><td>7.2</td><td>0.26</td><td>58</td><td>36</td><td>52</td><td>33</td><td>5.6</td></tr>
        <tr><td>7000</td><td>56</td><td>15.4</td><td>10.7</td><td>161.0</td><td>80.2</td><td>1042</td><td>36.8</td><td>6.5</td><td>0.23</td><td>64</td><td>40</td><td>58</td><td>36</td><td>4.0</td></tr>
        <tr><td>7700</td><td>63</td><td>21.0</td><td>10.5</td><td>216.2</td><td>79.6</td><td>1261</td><td>44.5</td><td>5.8</td><td>0.21</td><td>70</td><td>44</td><td>64</td><td>40</td><td>2.9</td></tr>
        <tr><td>8400</td><td>71</td><td>28.1</td><td>10.3</td><td>283.4</td><td>78.8</td><td>1501</td><td>52.9</td><td>5.3</td><td>0.19</td><td>77</td><td>48</td><td>70</td><td>43</td><td>2.2</td></tr>
        <tr><td>9100</td><td>81</td><td>37.0</td><td>10.1</td><td>364.3</td><td>77.9</td><td>1762</td><td>62.1</td><td>4.8</td><td>0.17</td><td>83</td><td>52</td><td>76</td><td>47</td><td>1.7</td></tr>
        <tr><td>9800</td><td>91</td><td>48.3</td><td>9.8</td><td>460.2</td><td>77.1</td><td>2043</td><td>72.1</td><td>4.4</td><td>0.16</td><td>90</td><td>56</td><td>82</td><td>51</td><td>1.3</td></tr>
        <tr><td>10303</td><td>100</td><td>59.2</td><td>9.5</td><td>545.4</td><td>76.0</td><td>2258</td><td>79.7</td><td>4.1</td><td>0.15</td><td>94</td><td>59</td><td>86</td><td>53</td><td>1.0</td></tr>
      </tbody>
    </table>
    <h2 class="next">Caractéristiques du Moteur</h2>
  </div>
  </main>
  <div class="scrollbar"><i></i></div>
  </div>
</div>
</div>
</body>
</html>
```
FILE: styles.css
```css
* { box-sizing: border-box; }
html, body { height: 100%; }
body {
  margin: 0;
  display: flex;
  flex-direction: column;
  overflow: hidden;
  font: 12px/16px "Liberation Sans", Arial, sans-serif;
  color: #000;
}
.sprite { display: none; }
h2 { margin: 0; font-size: 12px; line-height: 17px; font-weight: bold; }

/* system menu bar */
.menubar {
  display: flex;
  align-items: center;
  gap: 19px;
  height: 22px;
  padding: 0 25px 0 19px;
  background: linear-gradient(90deg, #ece5df, #e6dfdc);
  font: 13px/22px Inter, sans-serif;
  color: #2a2523;
  white-space: nowrap;
}
.ic { width: 16px; height: 16px; flex: none; }
.status { display: flex; align-items: center; gap: 14px; margin-left: auto; }
.status .dropbox { width: 18px; margin-left: -4px; }
.status .mem { margin-right: -8px; margin-left: -5px; }
.status .gb { margin-right: 1px; }
.status .wide { width: 20px; }
.t123 { font: bold 8px "Liberation Sans", sans-serif; fill: #555; }

/* desktop behind the window */
.desktop {
  position: relative;
  flex: 1;
  min-height: 0;
  padding: 2px 15px 27px 16px;
  background:
    linear-gradient(100deg, transparent 26%, #4b4f52 27%, #4b4f52 68%, transparent 69%) bottom / 100% 27px no-repeat,
    linear-gradient(#474b52, #4f5556 30%, #85898a 60%, #4c4d5c) bottom / 100% 27px no-repeat,
    linear-gradient(#6a5a4a, #8c7a68 8%, #9a8878 16%, #5c4c3c 28%, #4a3c2c 33%, #55742e 35%, #4a6c24 48%, #5a6a48 58%, #3f661f 65%, #47701c 77%, #55565a 79%, #4a505c 100%);
}
.desk { position: absolute; right: 1px; width: 17px; font: bold 14px/14px "Liberation Sans", sans-serif; color: #d5d8d2; }
.d1 { top: 500px; } .d2 { top: 573px; } .d3 { top: 851px; } .d4 { top: 1072px; } .d5 { top: 1146px; }
.year { right: 820px; bottom: 16px; width: auto; font-size: 17px; font-weight: normal; color: #a3a6a6; }
.window {
  position: relative;
  display: flex;
  flex-direction: column;
  height: 100%;
  background: #fff;
  border-radius: 8px;
  overflow: hidden;
  box-shadow: 0 2px 8px rgba(0, 0, 0, .4);
}

/* tab strip */
.tabs { display: flex; align-items: center; height: 42px; padding: 0 57px 0 13px; background: #dee1e6; flex: none; }
.light { width: 12px; height: 12px; border-radius: 50%; margin-right: 8px; flex: none; }
.red { background: #fc5b57; } .yellow { background: #fdbc40; } .green { background: #33c748; }
.tablist { display: flex; flex: 1; min-width: 0; align-self: flex-end; height: 34px; margin-left: 6px; }
.tab {
  display: flex;
  align-items: center;
  gap: 8px;
  flex: 1 1 0;
  min-width: 0;
  padding: 0 8px 0 7px;
  font: 12px/16px Inter, sans-serif;
  color: #4a4d52;
  background: linear-gradient(#85898f, #85898f) right center / 1px 20px no-repeat;
}
.tab span { flex: 1; min-width: 0; overflow: hidden; white-space: pre; -webkit-mask: linear-gradient(90deg, #000 50%, transparent); mask: linear-gradient(90deg, #000 50%, transparent); }
.tab.active { background: #fff; border-radius: 8px 8px 0 0; gap: 7px; }
.close { width: 9px; height: 9px; flex: none; margin-right: 4px; }
.plus { width: 14px; height: 14px; margin-left: 15px; flex: none; }

/* toolbar */
.toolbar { display: flex; align-items: center; gap: 16px; height: 36px; padding: 0 14px; flex: none; }
.toolbar .vsep ~ * { margin-left: -3px; }
.omnibox { display: flex; align-items: center; gap: 16px; flex: 1; min-width: 0; height: 28px; padding: 0 10px 0 13px; margin-left: -2px; border-radius: 14px; background: #f1f3f4; }
.lock { width: 10px; height: 13px; flex: none; margin-right: -5px; }
.url { flex: 1; min-width: 0; overflow: hidden; white-space: nowrap; font: 14px/20px Inter, sans-serif; color: #5f6368; }
.url b { font-weight: normal; color: #202124; }
.ext { position: relative; display: flex; }
.ext em { position: absolute; left: 8px; top: 9px; padding: 0 2px; border-radius: 2px; background: #000; color: #fff; font: bold 9px/11px "Liberation Sans", sans-serif; }
.vsep { width: 1px; height: 16px; background: #c8cacd; flex: none; }
.avatar { width: 22px; height: 22px; border-radius: 50%; background: #7e57c2; color: #fff; text-align: center; line-height: 20px; }

/* bookmarks */
.bookmarks { display: flex; align-items: center; gap: 16px; height: 33px; padding: 0 14px 2px; border-bottom: 1px solid #d9dadd; flex: none; font: 12px/16px Inter, "Noto Sans CJK SC", sans-serif; color: #3c4043; }
.bookmarks a { display: flex; gap: 8px; color: inherit; text-decoration: none; white-space: nowrap; }
.clip { width: 113px; overflow: hidden; }
.w3d { width: 18px; }
.leaf { fill: #43a02c; } .duet { fill: #1428f0; }
.more { margin-left: auto; font-size: 15px; }

/* page */
.viewport { display: flex; flex: 1; min-height: 0; }
.page { flex: 1; min-width: 0; overflow: hidden; padding: 3px 3px 0 0; }
.scrollbar { width: 15px; padding: 119px 3px 0; background: #fafafa; border-left: 1px solid #e6e6e6; }
.scrollbar i { display: block; height: 67%; border-radius: 4px; background: #c1c1c1; }
.sheet { width: 100%; max-width: 1363px; margin: 0 auto; }

.inputs { border: solid #000; border-width: 1px 0; }
.row {
  display: grid;
  grid-template-columns: 93fr 402fr 130fr 130fr 120fr 133fr 109fr 132fr 114fr;
  min-height: 67px;
  padding-top: 2px;
}
.row.first { padding-top: 4px; min-height: 69px; }
.row.tall { min-height: 70px; }
.row h2 { padding-left: 2px; }
.row > * { min-width: 0; white-space: nowrap; }
.pink { background: #f7dfdf; }
.cap { display: block; height: 18px; line-height: 17px; }
.note { display: block; line-height: 16px; }
.line { display: flex; align-items: center; gap: 4px; margin-bottom: 2px; }
.line.dash { gap: 3px; }
.line label { display: flex; align-items: center; gap: 2px; }
input, select, button { font: 12px/14px "Liberation Sans", Arial, sans-serif; color: #000; margin: 0; flex: none; }
input { width: 41px; height: 21px; padding: 0 4px 1px; border: 1px solid #868686; border-radius: 3px; background: #fff; }
input.short { width: 35px; }
select {
  height: 19px;
  padding: 0 0 1px 7px;
  border: 1px solid #868686;
  border-radius: 5px;
  appearance: none;
  background: #f8f8f8 url("data:image/svg+xml,%3Csvg xmlns='http://www.w3.org/2000/svg' width='6' height='12'%3E%3Cpath d='M3 0l3 5H0zM3 12L0 7h6z' fill='%23222'/%3E%3C/svg%3E") right 4px center no-repeat;
}
button { height: 22px; padding: 0 0 2px; border: 1px solid #a9a9a9; background: linear-gradient(#e6e6e6, #f7f7f7); }
.lead { margin-left: 7px; } .lead1 { margin-left: -2px; } .lead2 { margin-left: 10px; }
.line .lead1 { gap: 0; }
.warn, .warn input, .warn select { color: #ff4048; }
.warn select { background-image: url("data:image/svg+xml,%3Csvg xmlns='http://www.w3.org/2000/svg' width='6' height='12'%3E%3Cpath d='M3 0l3 5H0zM3 12L0 7h6z' fill='%23ff4048'/%3E%3C/svg%3E"); }
.motor .line { height: 22px; padding-left: 2px; gap: 6px; }
.motor button { margin-left: auto; margin-right: 14px; }
.below { padding-top: 3px; }
.focus { border-color: #7aa7d8; box-shadow: 0 0 0 3px #9ecaff; }
.w35 { width: 35px; } .w52 { width: 52px; } .w55 { width: 55px; } .w57 { width: 57px; } .w61 { width: 61px; }
.w67 { width: 67px; } .w72 { width: 72px; } .w78 { width: 78px; } .w81 { width: 81px; } .w86 { width: 86px; }
.w91 { width: 91px; } .w112 { width: 112px; } .w118 { width: 118px; } .w120 { width: 120px; } .w122 { width: 122px; }
.w129 { width: 129px; } .w177 { width: 177px; } .w216 { width: 216px; } .w226 { width: 226px; } .w241 { width: 241px; }

/* gauges */
.gauges { display: grid; grid-template-columns: repeat(6, 1fr); height: 177px; padding: 8px 2px 0 0; border-bottom: 1px solid #000; }
figure { margin: 0; text-align: center; }
figure svg { display: block; width: 140px; height: 140px; margin: 0 auto 6px; }
.ok { stroke: #8ac88d; } .mid { stroke: #ffd699; } .bad { stroke: #f1afa1; }
.tick { font-size: 8px; fill: #444; }
.end { text-anchor: end; }
.mid-a, .unit, .val { text-anchor: middle; }
.unit { font-size: 15px; fill: #333; }
.val { font-size: 15px; fill: #000; }
.hub { fill: #4684ee; stroke: #666; }

/* remarks */
.remark { display: flex; padding-top: 4px; height: 50px; line-height: 17px; color: #f0001c; }
.remark h2 { width: 92px; padding-left: 2px; color: #000; }
.remark ul { margin: 0; padding-left: 25px; }

/* results */
.results { display: grid; grid-template-columns: 191fr 216fr 197fr 237fr 267fr 255fr; min-height: 294px; }
.block { padding: 2px 0 0 10px; }
.block.pink { padding-left: 2px; }
.block h2 { line-height: 16px; }
.block .sub { margin-top: 18px; }
.kv { width: 100%; table-layout: fixed; border-collapse: collapse; }
.kv th, .kv td { height: 21px; padding: 0; font-weight: normal; text-align: right; white-space: nowrap; }
.kv th { text-align: left; padding-left: 2px; }
.kv td:nth-child(2) { width: 36px; }
.kv td:last-child { text-align: left; padding-left: 5px; }
.u32 td:last-child { width: 32px; } .u36 td:last-child { width: 36px; } .u40 td:last-child { width: 40px; }
.u44 td:last-child { width: 44px; } .u48 td:last-child { width: 48px; }

.actions { display: flex; gap: 3px; padding: 2px 2px 5px; border-bottom: 1px solid #000; }
.push { margin-right: auto; }

/* partial load table */
.partial { width: 100%; table-layout: fixed; border-collapse: collapse; border-bottom: 1px solid #000; }
.partial caption { font-weight: bold; line-height: 19px; }
.partial th, .partial td { height: 21px; padding: 0 2px 1px 0; font-weight: normal; text-align: right; white-space: nowrap; }
.partial th[colspan] { text-align: center; padding: 0 0 1px; }
.partial thead tr, .partial tbody tr:nth-child(even) { background: #f7dfdf; }
.partial .dim { color: #777; }
.partial .best td { font-weight: bold; }
.partial tbody::after { content: ""; display: table-row; height: 3px; }
col:nth-child(1) { width: 59px; } col:nth-child(2) { width: 71px; } col:nth-child(3) { width: 120px; }
col:nth-child(4) { width: 118px; } col:nth-child(5) { width: 115px; } col:nth-child(6) { width: 106px; }
col:nth-child(7) { width: 76px; } col:nth-child(8) { width: 71px; } col:nth-child(9) { width: 77px; }
col:nth-child(10) { width: 92px; } col:nth-child(11) { width: 68px; } col:nth-child(12) { width: 63px; }
col:nth-child(13) { width: 84px; } col:nth-child(14) { width: 76px; } col:nth-child(15) { width: 167px; }
.next { padding-top: 2px; text-align: center; }
```
